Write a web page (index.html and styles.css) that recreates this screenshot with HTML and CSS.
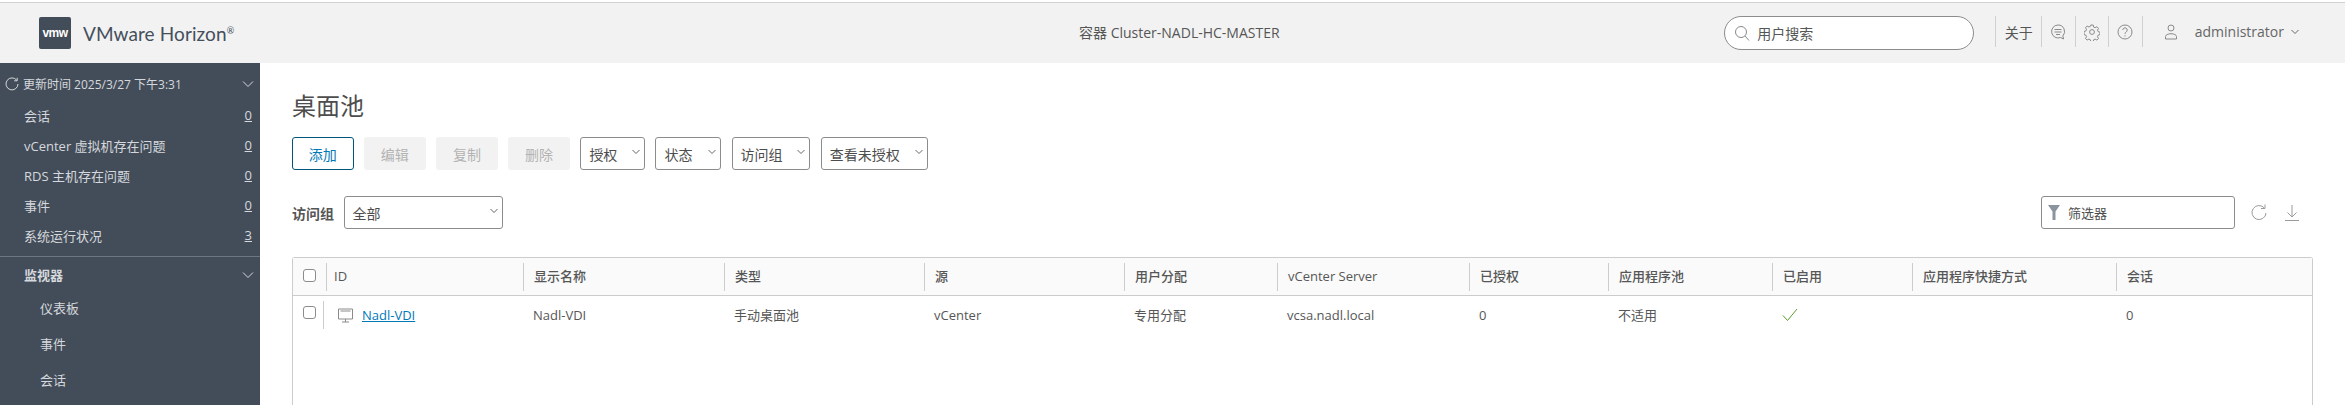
FILE: index.html
```html
<!DOCTYPE html>
<html lang="zh-CN">
<head>
  <meta charset="UTF-8" />
  <title>VMware Horizon</title>
  <link rel="stylesheet" href="styles.css">
</head>
<body>

<header class="topbar">
  <div class="brand">
    <div class="logo">vmw</div>
    <div class="brand-name">VMware Horizon<sup>®</sup></div>
  </div>
  <div class="pod-name">容器 Cluster-NADL-HC-MASTER</div>
  <div class="top-right">
    <div class="search">
      <svg class="search-icon" width="16" height="16" viewBox="0 0 16 16"><circle cx="7" cy="7" r="5.5"/><path d="M11 11l4 4.5"/></svg>
      <span>用户搜索</span>
    </div>
    <div class="top-item about">关于</div>
    <div class="top-item icon-item">
      <svg width="16" height="18" viewBox="0 0 16 18"><path d="M8 2a6.500 6.500 0 1 0 2.600 12.500l3 1.500-.8-3A6.500 6.500 0 0 0 8 2z"/><path d="M4.500 6.500h7M4.500 9h7M6 11.500h4"/></svg>
    </div>
    <div class="top-item icon-item">
      <svg width="16" height="18" viewBox="0 0 16 18"><circle cx="8" cy="9" r="2.400"/><path d="M6.800 2h2.400l.4 2 1.500.7 1.800-1 1.600 1.700-1 1.700.7 1.600 1.800.5v2.400l-1.800.5-.7 1.600 1 1.700-1.600 1.700-1.800-1-1.500.7-.4 2H6.800l-.4-2-1.500-.7-1.800 1-1.600-1.700 1-1.700-.7-1.600-1.800-.5V8.500l1.800-.5.7-1.600-1-1.700 1.600-1.700 1.800 1 1.500-.7z"/></svg>
    </div>
    <div class="top-item icon-item">
      <svg width="16" height="18" viewBox="0 0 16 18"><circle cx="8" cy="9" r="7"/><path d="M5.800 7a2.200 2.200 0 1 1 3.400 1.900c-.8.5-1.200 1-1.200 2"/><path d="M8 12.300v1.200"/></svg>
    </div>
    <div class="top-item user">
      <svg width="14" height="18" viewBox="0 0 14 18"><circle cx="7" cy="5" r="3"/><path d="M1.500 16v-2.500c0-1.500 2.500-2.800 5.500-2.800s5.500 1.300 5.500 2.800V16z"/></svg>
      <span>administrator</span>
      <svg class="chev-small" width="8" height="6" viewBox="0 0 8 6"><path d="M.5 1l3.500 3.500L7.500 1"/></svg>
    </div>
  </div>
</header>

<div class="page">
  <nav class="sidebar">
    <div class="side-head">
      <svg width="14" height="14" viewBox="0 0 14 14"><path d="M11.800 3.300A6 6 0 1 0 13 7"/><path d="M12.200.8v3h-3"/></svg>
      <span>更新时间 2025/3/27 下午3:31</span>
      <svg class="side-chev" width="12" height="8" viewBox="0 0 12 8"><path d="M1 1.500l5 5 5-5"/></svg>
    </div>
    <div class="side-row"><span>会话</span><a>0</a></div>
    <div class="side-row"><span>vCenter 虚拟机存在问题</span><a>0</a></div>
    <div class="side-row"><span>RDS 主机存在问题</span><a>0</a></div>
    <div class="side-row"><span>事件</span><a>0</a></div>
    <div class="side-row"><span>系统运行状况</span><a>3</a></div>
    <div class="side-line"></div>
    <div class="side-group">
      <span>监视器</span>
      <svg class="side-chev" width="12" height="8" viewBox="0 0 12 8"><path d="M1 1.500l5 5 5-5"/></svg>
    </div>
    <div class="side-sub">仪表板</div>
    <div class="side-sub">事件</div>
    <div class="side-sub">会话</div>
  </nav>

  <main class="content">
    <h1>桌面池</h1>

    <div class="toolbar">
      <button class="btn btn-primary">添加</button>
      <button class="btn btn-off">编辑</button>
      <button class="btn btn-off">复制</button>
      <button class="btn btn-off">删除</button>
      <div class="drop w-quan"><span>授权</span><svg width="8" height="6" viewBox="0 0 8 6"><path d="M.5 1l3.500 3.500L7.500 1"/></svg></div>
      <div class="drop w-state"><span>状态</span><svg width="8" height="6" viewBox="0 0 8 6"><path d="M.5 1l3.500 3.500L7.500 1"/></svg></div>
      <div class="drop w-group"><span>访问组</span><svg width="8" height="6" viewBox="0 0 8 6"><path d="M.5 1l3.500 3.500L7.500 1"/></svg></div>
      <div class="drop w-view"><span>查看未授权</span><svg width="8" height="6" viewBox="0 0 8 6"><path d="M.5 1l3.500 3.500L7.500 1"/></svg></div>
    </div>

    <div class="filter-row">
      <label class="group-label">访问组</label>
      <div class="drop w-all"><span>全部</span><svg width="8" height="6" viewBox="0 0 8 6"><path d="M.5 1l3.500 3.500L7.500 1"/></svg></div>
      <div class="filter-right">
        <div class="filter-box">
          <svg width="12" height="15" viewBox="0 0 12 15"><path class="fill" d="M0 0h12L7.500 6.500V15h-3V6.500z"/></svg>
          <span>筛选器</span>
        </div>
        <svg class="tool-icon" width="16" height="20" viewBox="0 0 16 20"><path d="M13.500 5.200A7 7 0 1 0 15 10"/><path d="M14 1.500v4h-4"/></svg>
        <svg class="tool-icon" width="14" height="18" viewBox="0 0 14 18"><path d="M7 1v12M2.500 8.500L7 13l4.500-4.500"/><path d="M0 16.500h14"/></svg>
      </div>
    </div>

    <div class="grid">
      <div class="grid-row grid-head">
        <div class="cell cell-check"><span class="check"></span></div>
        <div class="cell cell-first">ID</div>
        <div class="cell">显示名称</div>
        <div class="cell">类型</div>
        <div class="cell">源</div>
        <div class="cell">用户分配</div>
        <div class="cell">vCenter Server</div>
        <div class="cell">已授权</div>
        <div class="cell">应用程序池</div>
        <div class="cell">已启用</div>
        <div class="cell">应用程序快捷方式</div>
        <div class="cell">会话</div>
      </div>
      <div class="grid-row grid-body">
        <div class="cell cell-check"><span class="check"></span></div>
        <div class="cell cell-id">
          <svg width="15" height="15" viewBox="0 0 15 15"><path d="M.5 1h14v10H.5z"/><path d="M2.500 3h10"/><path d="M7.500 11v3M4 14h7"/></svg>
          <a>Nadl-VDI</a>
        </div>
        <div class="cell">Nadl-VDI</div>
        <div class="cell">手动桌面池</div>
        <div class="cell">vCenter</div>
        <div class="cell">专用分配</div>
        <div class="cell">vcsa.nadl.local</div>
        <div class="cell">0</div>
        <div class="cell">不适用</div>
        <div class="cell"><svg class="ok" width="16" height="14" viewBox="0 0 16 14"><path d="M1 7.500l4.500 5L15 1"/></svg></div>
        <div class="cell"></div>
        <div class="cell">0</div>
      </div>
    </div>
  </main>
</div>

</body>
</html>
```

FILE: styles.css
```css
html, body {
  margin: 0;
  padding: 0;
  height: 405px;
  overflow: hidden;
}
body {
  font-family: "Open Sans", "Noto Sans CJK SC", sans-serif;
  font-size: 13px;
  color: #565656;
  background: #fff;
}
svg {
  display: block;
  flex: none;
  fill: none;
  stroke: #8a8a8a;
  stroke-width: 1;
}

/* top bar */
.topbar {
  height: 60px;
  margin-top: 2px;
  border-top: 1px solid #d2d2d2;
  background: #f2f2f2;
  display: flex;
  align-items: center;
}
.brand {
  width: 1040px;
  padding-left: 39px;
  display: flex;
  align-items: center;
  gap: 12px;
}
.logo {
  width: 32px;
  height: 32px;
  border-radius: 2px;
  background: #434d5a;
  color: #fff;
  font-family: "Liberation Sans", sans-serif;
  font-weight: bold;
  font-size: 12px;
  letter-spacing: -0.6px;
  line-height: 32px;
  text-align: center;
}
.brand-name {
  font-family: Lato, sans-serif;
  font-size: 19px;
  color: #454f5c;
  letter-spacing: .1px;
}
.brand-name sup {
  font-size: 9px;
  line-height: 0;
}
.pod-name {
  width: 205px;
  white-space: nowrap;
  font-size: 14px;
  color: #565656;
  margin-bottom: 2px;
}
.top-right {
  margin-left: auto;
  display: flex;
  align-items: center;
  padding-right: 46px;
}
.search {
  width: 250px;
  height: 34px;
  box-sizing: border-box;
  border: 1px solid #8c8c8c;
  border-radius: 17px;
  background: #fff;
  display: flex;
  align-items: center;
  gap: 7px;
  padding-left: 9px;
  font-size: 14px;
  margin-right: 21px;
}
.top-item {
  height: 31px;
  border-left: 1px solid #d0d0d0;
  display: flex;
  align-items: center;
  justify-content: center;
  box-sizing: border-box;
  margin-bottom: 3px;
}
.about {
  width: 46px;
  font-size: 14px;
}
.icon-item {
  width: 33.5px;
}
.user {
  padding-left: 21px;
  gap: 17px;
  justify-content: flex-start;
  font-size: 14px;
}
.user span {
  margin-right: -10px;
  color: #666;
}
.chev-small {
  stroke: #666;
}

/* sidebar */
.page {
  display: flex;
  height: 342px;
}
.sidebar {
  width: 260px;
  flex: none;
  background: #434d5a;
  color: #d5d8dc;
  padding-top: 5px;
  box-sizing: border-box;
}
.sidebar svg {
  stroke: #d5d8dc;
}
.side-head {
  height: 30px;
  margin-bottom: 2px;
  display: flex;
  align-items: center;
  padding: 2px 0 0 5px;
  box-sizing: border-box;
  gap: 4px;
  font-size: 12px;
}
.side-chev {
  margin-left: auto;
  margin-right: 6px;
}
.side-row {
  height: 30px;
  display: flex;
  align-items: center;
  justify-content: space-between;
  padding: 0 8px 0 24px;
}
.side-row a {
  text-decoration: underline;
}
.side-line {
  height: 1px;
  background: #6d7681;
  margin-top: 6px;
}
.side-group {
  height: 33px;
  display: flex;
  align-items: center;
  padding-left: 24px;
  font-weight: bold;
  padding-top: 2px;
  box-sizing: border-box;
}
.side-sub {
  height: 36px;
  line-height: 36px;
  padding-left: 40px;
}

/* main area */
.content {
  flex: 1;
  padding: 0 32px;
  box-sizing: border-box;
}
h1 {
  margin: 26px 0 0;
  height: 48px;
  font-size: 24px;
  font-weight: normal;
  line-height: 34px;
  color: #4d4d4d;
}
.toolbar {
  display: flex;
  height: 33px;
  gap: 10.6px;
}
.btn {
  width: 61.5px;
  height: 33px;
  box-sizing: border-box;
  border: 1px solid transparent;
  border-radius: 3px;
  background: #f2f2f2;
  font-family: inherit;
  font-size: 14px;
  padding: 0;
}
.btn-primary {
  background: #fff;
  border-color: #00567a;
  color: #0079b8;
}
.btn-off {
  color: #b3b3b3;
}
.drop {
  height: 33px;
  box-sizing: border-box;
  border: 1px solid #8c8c8c;
  border-radius: 3px;
  background: #fff;
  display: flex;
  align-items: center;
  justify-content: space-between;
  padding: 0 4px 4px 8px;
  font-size: 14px;
  color: #4d4d4d;
}
.drop span {
  margin-top: 4px;
}
.drop svg {
  stroke: #666;
}
.w-quan { width: 64.5px; }
.w-state { width: 65.5px; }
.w-group { width: 78.5px; }
.w-view { width: 107px; }
.w-all { width: 159px; margin-left: 9.5px; }

.filter-row {
  display: flex;
  align-items: center;
  height: 33px;
  margin-top: 26px;
}
.group-label {
  font-weight: bold;
  font-size: 14px;
}
.filter-right {
  margin-left: auto;
  display: flex;
  align-items: center;
  margin-right: 14px;
}
.filter-box {
  width: 194px;
  height: 33px;
  box-sizing: border-box;
  border: 1px solid #8c8c8c;
  border-radius: 3px;
  display: flex;
  align-items: center;
  gap: 8px;
  padding-left: 6px;
  color: #4d4d4d;
}
.filter-box .fill {
  fill: #8a939e;
  stroke: none;
}
.tool-icon {
  margin-left: 16px;
  stroke: #9a9a9a;
}
.tool-icon + .tool-icon {
  margin-left: 18px;
}

/* table */
.grid {
  margin-top: 28px;
  height: 160px;
  box-sizing: border-box;
  border: 1px solid #ccc;
  border-bottom: 0;
  border-radius: 3px 3px 0 0;
}
.grid-row {
  display: grid;
  grid-template-columns: 33px 197px 201px 200px 200px 153px 192px 139px 164px 140px 204px 1fr;
}
.grid-head {
  height: 38px;
  background: #fafafa;
  border-bottom: 1px solid #ccc;
  padding-top: 5px;
  box-sizing: border-box;
  font-weight: 500;
}
.grid-head .cell {
  height: 28px;
  line-height: 26px;
  border-left: 1px solid #ccc;
  padding-bottom: 2px;
}
.grid-head .cell-check {
  border-left: 0;
  padding-bottom: 3px;
}
.grid-body {
  padding-top: 5px;
}
.cell {
  padding-left: 10px;
  box-sizing: border-box;
  line-height: 28px;
  white-space: nowrap;
  display: flex;
  align-items: center;
}
.grid-head .cell-first {
  padding-left: 7px;
}
.grid-body .cell-check {
  height: 28px;
  border-right: 1px solid #ccc;
  width: 31px;
  padding-bottom: 5px;
}
.cell-check {
  padding-left: 10px;
}
.check {
  width: 13px;
  height: 13px;
  box-sizing: border-box;
  border: 1px solid #8c8c8c;
  border-radius: 3px;
  background: #fff;
}
.cell-id {
  padding-left: 12px;
  gap: 9px;
}
.cell-id a {
  color: #0079b8;
  text-decoration: underline;
}
.ok {
  stroke: #5a9e2c;
}
```
